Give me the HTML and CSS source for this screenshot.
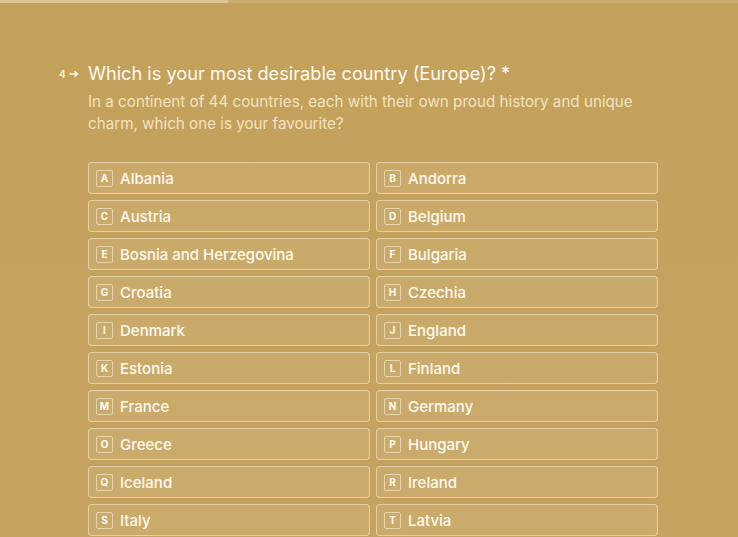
FILE: index.html
```html
<!DOCTYPE html>
<html>
<head>
<meta charset="utf-8">
<link rel="stylesheet" href="styles.css">
</head>
<body>
<div class="progress"><div class="progress-fill"></div></div>
<main class="question">
  <div class="q-head">
    <span class="q-num">4<svg class="q-arrow" width="10" height="8" viewBox="0 0 10 8"><path d="M0.5 4H8M5.5 1.3L8.4 4L5.5 6.7" fill="none" stroke="currentColor" stroke-width="1.4"/></svg></span>
    <h1 class="q-title">Which is your most desirable country (Europe)? *</h1>
  </div>
  <p class="q-desc">In a continent of 44 countries, each with their own proud history and unique charm, which one is your favourite?</p>
  <div class="options">
    <div class="opt"><span class="key">A</span><span class="label">Albania</span></div>
    <div class="opt"><span class="key">B</span><span class="label">Andorra</span></div>
    <div class="opt"><span class="key">C</span><span class="label">Austria</span></div>
    <div class="opt"><span class="key">D</span><span class="label">Belgium</span></div>
    <div class="opt"><span class="key">E</span><span class="label">Bosnia and Herzegovina</span></div>
    <div class="opt"><span class="key">F</span><span class="label">Bulgaria</span></div>
    <div class="opt"><span class="key">G</span><span class="label">Croatia</span></div>
    <div class="opt"><span class="key">H</span><span class="label">Czechia</span></div>
    <div class="opt"><span class="key">I</span><span class="label">Denmark</span></div>
    <div class="opt"><span class="key">J</span><span class="label">England</span></div>
    <div class="opt"><span class="key">K</span><span class="label">Estonia</span></div>
    <div class="opt"><span class="key">L</span><span class="label">Finland</span></div>
    <div class="opt"><span class="key">M</span><span class="label">France</span></div>
    <div class="opt"><span class="key">N</span><span class="label">Germany</span></div>
    <div class="opt"><span class="key">O</span><span class="label">Greece</span></div>
    <div class="opt"><span class="key">P</span><span class="label">Hungary</span></div>
    <div class="opt"><span class="key">Q</span><span class="label">Iceland</span></div>
    <div class="opt"><span class="key">R</span><span class="label">Ireland</span></div>
    <div class="opt"><span class="key">S</span><span class="label">Italy</span></div>
    <div class="opt"><span class="key">T</span><span class="label">Latvia</span></div>
  </div>
</main>
</body>
</html>
```
FILE: styles.css
```css
html, body {
  margin: 0;
  padding: 0;
  height: 100%;
  overflow: hidden;
}
body {
  background: linear-gradient(180deg, #c4a15b 0%, #c5a35f 100%);
  font-family: Inter, "Noto Sans", sans-serif;
  color: #fffaf0;
}
.progress {
  height: 3px;
  background: rgba(255, 255, 255, 0.12);
}
.progress-fill {
  width: 228px;
  height: 3px;
  background: #dcc592;
}
.question {
  padding: 56px 0 0 88px;
  width: 570px;
}
.q-head {
  position: relative;
  display: flex;
  align-items: center;
}
.q-num {
  position: absolute;
  left: -29px;
  top: 9px;
  font-size: 10px;
  display: flex;
  align-items: center;
  gap: 3px;
  font-weight: 600;
}
.q-arrow {
  display: block;
}
.q-title {
  margin: 0;
  font-size: 18.2px;
  font-weight: 400;
  line-height: 28px;
}
.q-desc {
  margin: 4px 0 0;
  font-size: 15.2px;
  line-height: 22px;
  color: rgba(255, 244, 220, 0.8);
}
.options {
  margin-top: 27px;
  display: grid;
  grid-template-columns: 282px 282px;
  column-gap: 6px;
  row-gap: 6px;
}
.opt {
  height: 32px;
  box-sizing: border-box;
  border: 1px solid rgba(255, 246, 225, 0.5);
  border-radius: 4px;
  background: rgba(255, 246, 225, 0.1);
  display: flex;
  align-items: center;
  padding-left: 7px;
  gap: 7px;
}
.key {
  width: 17px;
  height: 17px;
  box-sizing: border-box;
  border: 1px solid rgba(255, 246, 225, 0.55);
  border-radius: 2px;
  font-size: 10px;
  font-weight: 700;
  display: flex;
  align-items: center;
  justify-content: center;
  color: #fffaf0;
}
.label {
  font-size: 15px;
  font-weight: 450;
  color: #fffaf0;
}
```
